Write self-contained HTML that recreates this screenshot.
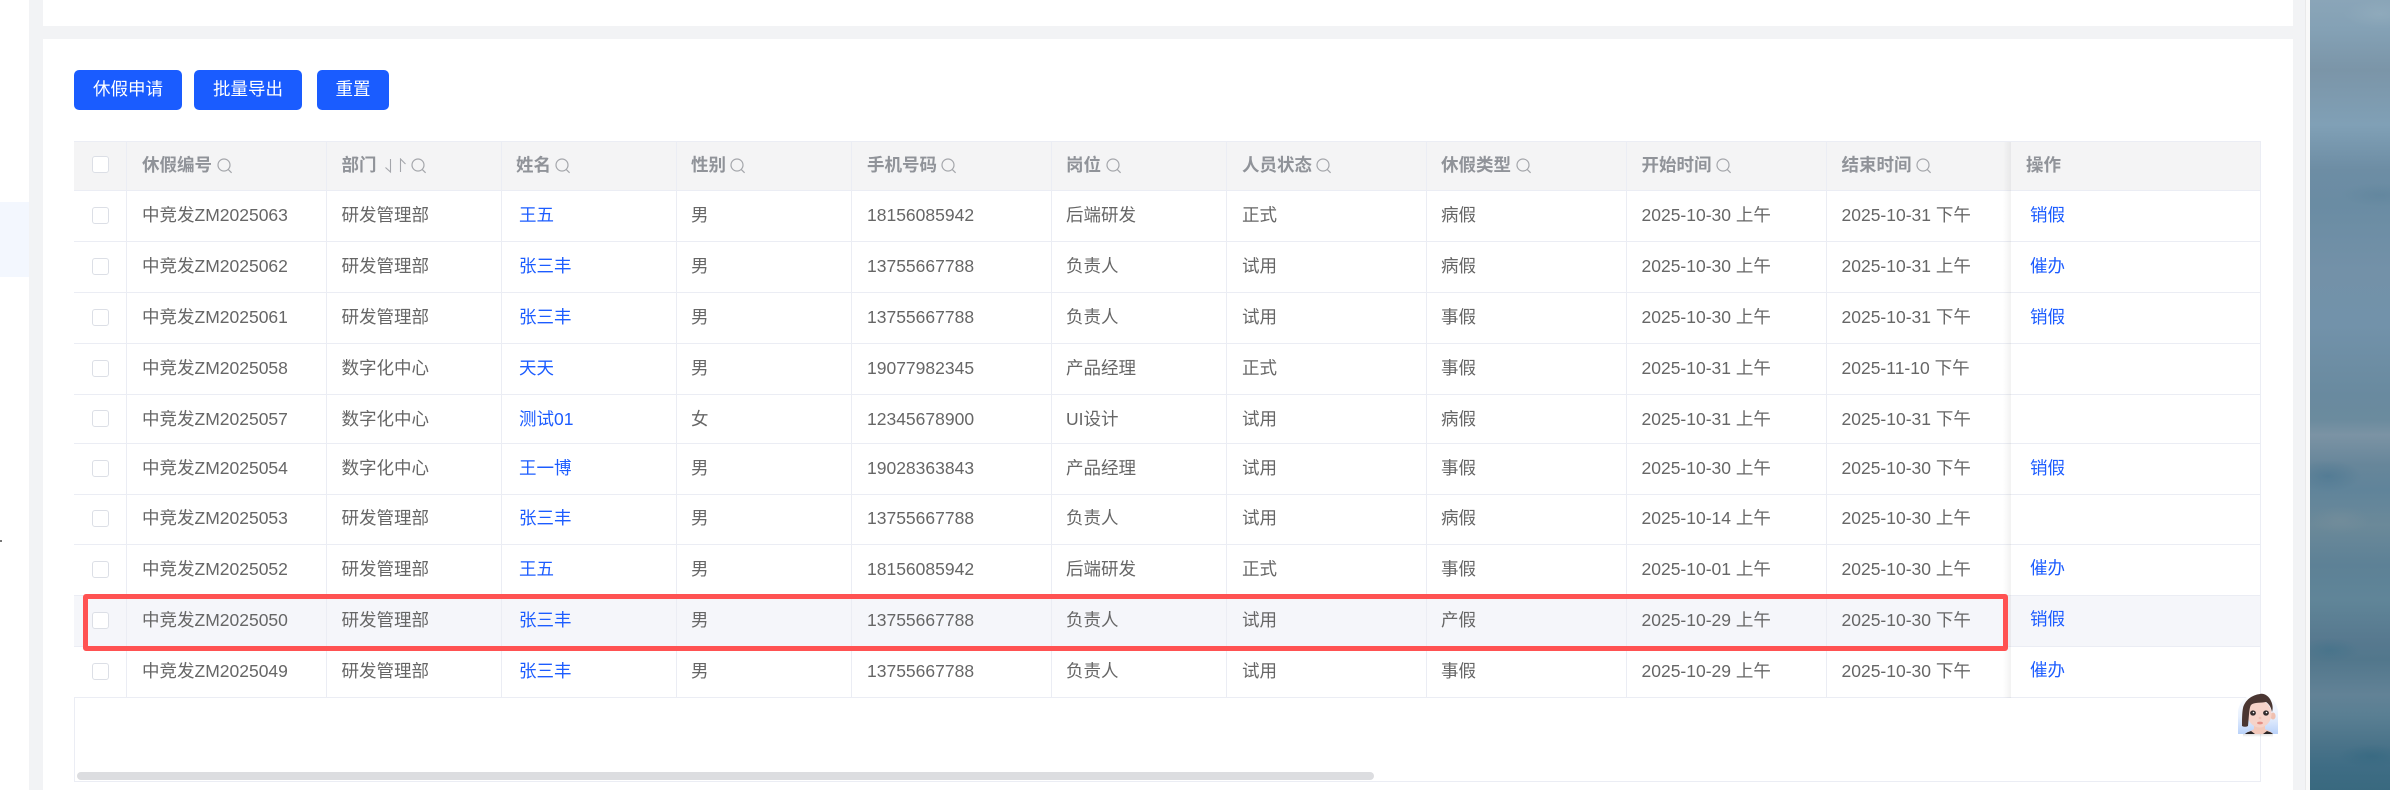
<!DOCTYPE html>
<html lang="zh-CN"><head><meta charset="utf-8"><title>休假</title>
<style>
*{box-sizing:border-box}
html,body{margin:0;padding:0;width:2390px;height:790px;overflow:hidden;background:#fff}
body{position:relative;font-family:"Liberation Sans","Noto Sans CJK SC",sans-serif;font-size:17.5px;color:#666}
.a{position:absolute}
.btn{position:absolute;top:70px;height:40px;background:#1a5cff;border-radius:5px;color:#fff;text-align:center;line-height:39px;font-size:17.5px}
.r{position:absolute;left:74px;width:2187px;background:#fff;border-bottom:1px solid #ebedf4}
.r span{position:absolute;top:0;white-space:nowrap;line-height:inherit}
.c1{left:68px}.c2{left:267.5px}.c3{left:442px}.c4{left:617px}.c5{left:793px}.c6{left:992px}.c7{left:1168px}.c8{left:1367px}.c9{left:1567.5px}.c10{left:1767.5px}
.r a{color:#1c5cff;text-decoration:none}
.r .c3 a{margin-left:3px}
.h{font-weight:700;color:#909399;background:#f4f4f5!important}
.h svg{position:absolute;top:16px}
.cb{position:absolute!important;left:18px;width:17px;height:17px;background:#fff;border:1px solid #dcdfe6;border-radius:3px}
.v{position:absolute;top:141px;height:557px;width:1px;background:#ebedf4}
.fx{position:absolute;left:2011px;width:250px;background:#fff;border-bottom:1px solid #ebedf4;border-right:1px solid #ebedf4}
.fx a{position:absolute;left:19px;color:#1c5cff;text-decoration:none;white-space:nowrap}
</style></head><body>

<!-- page gutters -->
<div class="a" style="left:29px;top:0;width:2264px;height:790px;background:#f2f3f5"></div>
<div class="a" style="left:0;top:202px;width:29px;height:75px;background:#f3f7fe"></div>
<div class="a" style="left:0;top:540px;width:2px;height:2px;background:#777"></div>
<div class="a" style="left:43px;top:0;width:2250px;height:26px;background:#fff"></div>
<div class="a" style="left:43px;top:39px;width:2250px;height:751px;background:#fff"></div>
<div class="a" style="left:2293px;top:0;width:13px;height:790px;background:#f2f3f5"></div>
<div class="a" style="left:2305px;top:0;width:1px;height:790px;background:#e9e9ea"></div>
<div class="a" style="left:2306px;top:0;width:4px;height:790px;background:#f9f9f9"></div>

<!-- right background -->
<div class="a" style="left:2310px;top:0;width:80px;height:790px;background:
radial-gradient(ellipse 34px 16px at 18px 476px,rgba(60,110,140,.4),rgba(60,110,140,0)),
radial-gradient(ellipse 40px 12px at 70px 195px,rgba(85,125,150,.35),rgba(85,125,150,0)),
radial-gradient(ellipse 36px 14px at 70px 14px,rgba(155,180,195,.4),rgba(155,180,195,0)),
radial-gradient(ellipse 30px 14px at 30px 520px,rgba(125,145,155,.4),rgba(125,145,155,0)),
radial-gradient(ellipse 30px 12px at 20px 650px,rgba(55,110,135,.4),rgba(55,110,135,0)),
radial-gradient(ellipse 34px 12px at 62px 756px,rgba(45,100,125,.45),rgba(45,100,125,0)),
linear-gradient(180deg,#8aa5b8 0,#84a1b5 30px,#7b95a8 70px,#80a0b6 125px,#6d8da4 170px,#6a8ca3 205px,#7391a8 270px,#7292aa 325px,#698a9f 395px,#6b8b9e 420px,#7b93a4 435px,#67869a 465px,#60849a 490px,#6b8999 525px,#5d8196 565px,#608598 600px,#57798f 640px,#52778c 660px,#628296 695px,#5a7f93 715px,#4a7389 745px,#3f6d85 765px,#39697f 790px)"></div>

<!-- buttons -->
<div class="btn" style="left:74px;width:108px">休假申请</div>
<div class="btn" style="left:194px;width:108px">批量导出</div>
<div class="btn" style="left:317px;width:72px">重置</div>

<!-- table outer -->
<div class="a" style="left:74px;top:141px;width:2187px;height:641px;border:1px solid #ebedf4;background:#fff"></div>

<!-- header -->
<div class="r h" style="top:141px;height:50px;line-height:47px;border-top:1px solid #ebedf4">
<span class="cb" style="top:14px"></span>
<span class="c1">休假编号</span>
<svg style="left:142.5px" width="16" height="16" viewBox="0 0 16 16" fill="none" stroke="#a4a6ab" stroke-width="1.2"><circle cx="7" cy="7" r="6"/><path d="M11.2 11.4L14.6 14.8"/></svg>
<span class="c2">部门</span>
<svg style="left:310px" width="24" height="16" viewBox="0 0 24 16" fill="none" stroke="#a4a6ab" stroke-width="1.1"><path d="M6.5 1V14L1.5 9.5"/><path d="M16.5 14V1L21.5 6"/></svg>
<svg style="left:337px" width="16" height="16" viewBox="0 0 16 16" fill="none" stroke="#a4a6ab" stroke-width="1.2"><circle cx="7" cy="7" r="6"/><path d="M11.2 11.4L14.6 14.8"/></svg>
<span class="c3">姓名</span>
<svg style="left:481px" width="16" height="16" viewBox="0 0 16 16" fill="none" stroke="#a4a6ab" stroke-width="1.2"><circle cx="7" cy="7" r="6"/><path d="M11.2 11.4L14.6 14.8"/></svg>
<span class="c4">性别</span>
<svg style="left:656px" width="16" height="16" viewBox="0 0 16 16" fill="none" stroke="#a4a6ab" stroke-width="1.2"><circle cx="7" cy="7" r="6"/><path d="M11.2 11.4L14.6 14.8"/></svg>
<span class="c5">手机号码</span>
<svg style="left:867px" width="16" height="16" viewBox="0 0 16 16" fill="none" stroke="#a4a6ab" stroke-width="1.2"><circle cx="7" cy="7" r="6"/><path d="M11.2 11.4L14.6 14.8"/></svg>
<span class="c6">岗位</span>
<svg style="left:1032px" width="16" height="16" viewBox="0 0 16 16" fill="none" stroke="#a4a6ab" stroke-width="1.2"><circle cx="7" cy="7" r="6"/><path d="M11.2 11.4L14.6 14.8"/></svg>
<span class="c7">人员状态</span>
<svg style="left:1242px" width="16" height="16" viewBox="0 0 16 16" fill="none" stroke="#a4a6ab" stroke-width="1.2"><circle cx="7" cy="7" r="6"/><path d="M11.2 11.4L14.6 14.8"/></svg>
<span class="c8">休假类型</span>
<svg style="left:1442px" width="16" height="16" viewBox="0 0 16 16" fill="none" stroke="#a4a6ab" stroke-width="1.2"><circle cx="7" cy="7" r="6"/><path d="M11.2 11.4L14.6 14.8"/></svg>
<span class="c9">开始时间</span>
<svg style="left:1642px" width="16" height="16" viewBox="0 0 16 16" fill="none" stroke="#a4a6ab" stroke-width="1.2"><circle cx="7" cy="7" r="6"/><path d="M11.2 11.4L14.6 14.8"/></svg>
<span class="c10">结束时间</span>
<svg style="left:1842px" width="16" height="16" viewBox="0 0 16 16" fill="none" stroke="#a4a6ab" stroke-width="1.2"><circle cx="7" cy="7" r="6"/><path d="M11.2 11.4L14.6 14.8"/></svg>
</div>

<!-- rows -->
<div class="r" style="top:191px;height:51px;line-height:49px"><span class="cb" style="top:16px"></span><span class="c1">中竞发ZM2025063</span><span class="c2">研发管理部</span><span class="c3"><a>王五</a></span><span class="c4">男</span><span class="c5">18156085942</span><span class="c6">后端研发</span><span class="c7">正式</span><span class="c8">病假</span><span class="c9">2025-10-30 上午</span><span class="c10">2025-10-31 下午</span></div>
<div class="r" style="top:242px;height:51px;line-height:49px"><span class="cb" style="top:16px"></span><span class="c1">中竞发ZM2025062</span><span class="c2">研发管理部</span><span class="c3"><a>张三丰</a></span><span class="c4">男</span><span class="c5">13755667788</span><span class="c6">负责人</span><span class="c7">试用</span><span class="c8">病假</span><span class="c9">2025-10-30 上午</span><span class="c10">2025-10-31 上午</span></div>
<div class="r" style="top:293px;height:51px;line-height:49px"><span class="cb" style="top:16px"></span><span class="c1">中竞发ZM2025061</span><span class="c2">研发管理部</span><span class="c3"><a>张三丰</a></span><span class="c4">男</span><span class="c5">13755667788</span><span class="c6">负责人</span><span class="c7">试用</span><span class="c8">事假</span><span class="c9">2025-10-30 上午</span><span class="c10">2025-10-31 下午</span></div>
<div class="r" style="top:344px;height:51px;line-height:49px"><span class="cb" style="top:16px"></span><span class="c1">中竞发ZM2025058</span><span class="c2">数字化中心</span><span class="c3"><a>天天</a></span><span class="c4">男</span><span class="c5">19077982345</span><span class="c6">产品经理</span><span class="c7">正式</span><span class="c8">事假</span><span class="c9">2025-10-31 上午</span><span class="c10">2025-11-10 下午</span></div>
<div class="r" style="top:395px;height:49px;line-height:48px"><span class="cb" style="top:15px"></span><span class="c1">中竞发ZM2025057</span><span class="c2">数字化中心</span><span class="c3"><a>测试01</a></span><span class="c4">女</span><span class="c5">12345678900</span><span class="c6">UI设计</span><span class="c7">试用</span><span class="c8">病假</span><span class="c9">2025-10-31 上午</span><span class="c10">2025-10-31 下午</span></div>
<div class="r" style="top:444px;height:51px;line-height:49px"><span class="cb" style="top:16px"></span><span class="c1">中竞发ZM2025054</span><span class="c2">数字化中心</span><span class="c3"><a>王一博</a></span><span class="c4">男</span><span class="c5">19028363843</span><span class="c6">产品经理</span><span class="c7">试用</span><span class="c8">事假</span><span class="c9">2025-10-30 上午</span><span class="c10">2025-10-30 下午</span></div>
<div class="r" style="top:495px;height:50px;line-height:47px"><span class="cb" style="top:15px"></span><span class="c1">中竞发ZM2025053</span><span class="c2">研发管理部</span><span class="c3"><a>张三丰</a></span><span class="c4">男</span><span class="c5">13755667788</span><span class="c6">负责人</span><span class="c7">试用</span><span class="c8">病假</span><span class="c9">2025-10-14 上午</span><span class="c10">2025-10-30 上午</span></div>
<div class="r" style="top:545px;height:51px;line-height:49px"><span class="cb" style="top:16px"></span><span class="c1">中竞发ZM2025052</span><span class="c2">研发管理部</span><span class="c3"><a>王五</a></span><span class="c4">男</span><span class="c5">18156085942</span><span class="c6">后端研发</span><span class="c7">正式</span><span class="c8">事假</span><span class="c9">2025-10-01 上午</span><span class="c10">2025-10-30 上午</span></div>
<div class="r" style="top:596px;height:51px;line-height:49px;background:#f5f6fa"><span class="cb" style="top:16px"></span><span class="c1">中竞发ZM2025050</span><span class="c2">研发管理部</span><span class="c3"><a>张三丰</a></span><span class="c4">男</span><span class="c5">13755667788</span><span class="c6">负责人</span><span class="c7">试用</span><span class="c8">产假</span><span class="c9">2025-10-29 上午</span><span class="c10">2025-10-30 下午</span></div>
<div class="r" style="top:647px;height:51px;line-height:49px"><span class="cb" style="top:16px"></span><span class="c1">中竞发ZM2025049</span><span class="c2">研发管理部</span><span class="c3"><a>张三丰</a></span><span class="c4">男</span><span class="c5">13755667788</span><span class="c6">负责人</span><span class="c7">试用</span><span class="c8">事假</span><span class="c9">2025-10-29 上午</span><span class="c10">2025-10-30 下午</span></div>

<!-- vertical lines -->
<div class="v" style="left:126px"></div><div class="v" style="left:326px"></div><div class="v" style="left:501px"></div><div class="v" style="left:676px"></div><div class="v" style="left:851px"></div><div class="v" style="left:1051px"></div><div class="v" style="left:1226px"></div><div class="v" style="left:1426px"></div><div class="v" style="left:1626px"></div><div class="v" style="left:1826px"></div>

<!-- fixed column -->
<div class="a" style="left:2003px;top:142px;width:8px;height:556px;background:linear-gradient(90deg,rgba(0,0,0,0),rgba(0,0,0,.05))"></div>
<div class="fx" style="top:141px;height:50px;line-height:47px;background:#f4f4f5;border-top:1px solid #ebedf4;font-weight:700;color:#909399"><span style="position:absolute;left:15px">操作</span></div>
<div class="fx" style="top:191px;height:51px;line-height:48px"><a>销假</a></div>
<div class="fx" style="top:242px;height:51px;line-height:49px"><a>催办</a></div>
<div class="fx" style="top:293px;height:51px;line-height:49px"><a>销假</a></div>
<div class="fx" style="top:344px;height:51px"></div>
<div class="fx" style="top:395px;height:49px"></div>
<div class="fx" style="top:444px;height:51px;line-height:49px"><a>销假</a></div>
<div class="fx" style="top:495px;height:50px"></div>
<div class="fx" style="top:545px;height:51px;line-height:47px"><a>催办</a></div>
<div class="fx" style="top:596px;height:51px;line-height:47px;background:#f5f6fa"><a>销假</a></div>
<div class="fx" style="top:647px;height:51px;line-height:47px"><a>催办</a></div>

<!-- scrollbar -->
<div class="a" style="left:77px;top:772px;width:1297px;height:8px;border-radius:4px;background:#dcdde0"></div>

<!-- red highlight -->
<div class="a" style="left:83px;top:594px;width:1925px;height:57px;border:5px solid #ff5252;border-radius:3px"></div>

<!-- avatar -->
<svg class="a" style="left:2237px;top:693px" width="42" height="44" viewBox="0 0 42 44">
<defs><linearGradient id="g" x1="0" y1="0" x2="0" y2="1"><stop offset="0" stop-color="#fff"/><stop offset=".55" stop-color="#e8f0fd"/><stop offset="1" stop-color="#b9d2fa"/></linearGradient>
<linearGradient id="s" x1="0" y1="0" x2="0" y2="1"><stop offset="0" stop-color="#000" stop-opacity=".12"/><stop offset="1" stop-color="#000" stop-opacity="0"/></linearGradient></defs>
<rect x="6" y="41" width="30" height="3" fill="url(#s)"/>
<path d="M1 41V20C1 9 10 1 21 1S41 9 41 20V41Z" fill="url(#g)"/>
<path d="M17 30H28V36C31 38 34 38 36 41H8C11 38 15 38 17 36Z" fill="#f3c9bb"/>
<path d="M8 41C10 39 12 39 14 38L18 41ZM36 41C34 39 32 39 30 38L26 41Z" fill="#2a2526"/>
<ellipse cx="36" cy="23" rx="2.6" ry="3.5" fill="#efc0b0"/>
<ellipse cx="22.5" cy="21" rx="12" ry="13.5" fill="#f6d3c9"/>
<path d="M5 33C5 27 5 20 6 15C8 7 15 2 23 1C27 0 32 3 34 8C36 12 36 16 35 19C34 14 32 11 29 9C25 10 17 9 14 12C12 15 12 24 11 33C9 34 7 34 5 33Z" fill="#4a3632"/>
<ellipse cx="16" cy="20" rx="2.9" ry="2.6" fill="#332d2e"/>
<ellipse cx="29" cy="20" rx="2.9" ry="2.6" fill="#332d2e"/>
<circle cx="16.5" cy="19.5" r=".8" fill="#fff"/><circle cx="29.5" cy="19.5" r=".8" fill="#fff"/>
<ellipse cx="23" cy="30" rx="3" ry="1.4" fill="#e58f85"/>
<ellipse cx="23" cy="25" rx="1.4" ry="1.2" fill="#efc2b5"/>
</svg>
</body></html>
